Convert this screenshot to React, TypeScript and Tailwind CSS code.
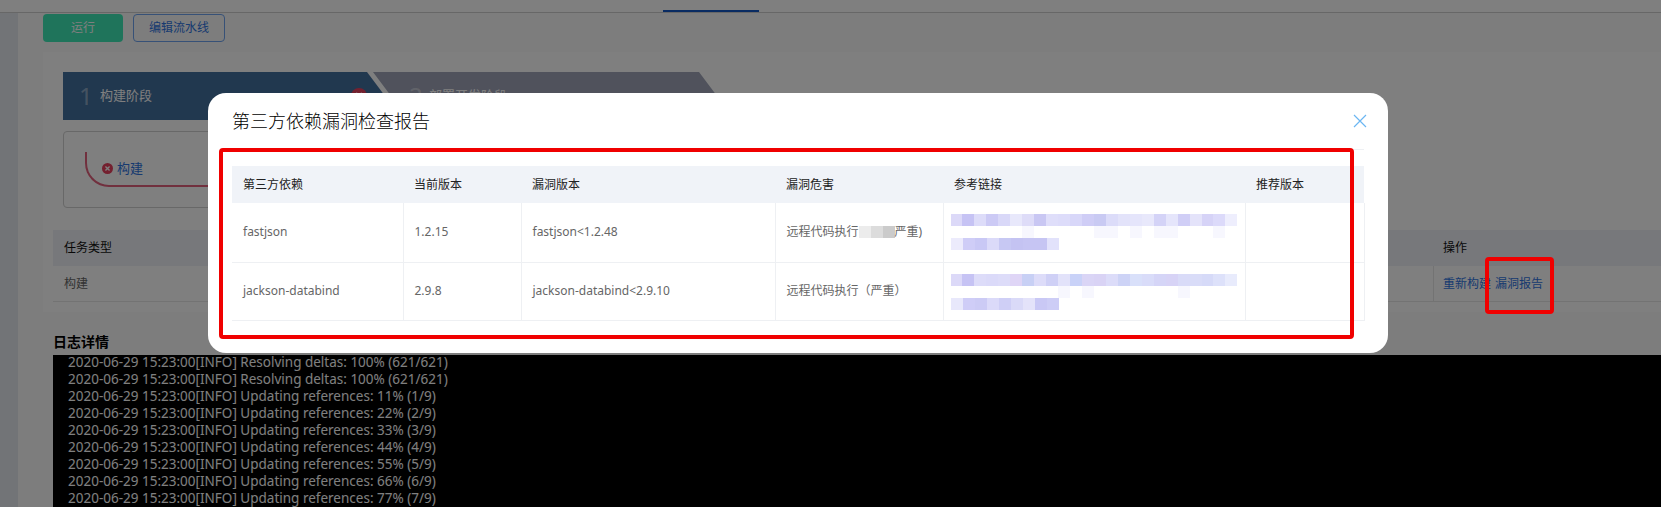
const FONT = "font-['Noto_Sans','Noto_Sans_CJK_SC',sans-serif]";

const logLines = [
  'Resolving deltas: 100% (621/621)',
  'Resolving deltas: 100% (621/621)',
  'Updating references: 11% (1/9)',
  'Updating references: 22% (2/9)',
  'Updating references: 33% (3/9)',
  'Updating references: 44% (4/9)',
  'Updating references: 55% (5/9)',
  'Updating references: 66% (6/9)',
  'Updating references: 77% (7/9)',
];

const W = '#ffffff';
const P = '#f7f7fe';
const mosaics = {
  a1: ['#dcd9f8', '#c6c3f4', '#dddcf9', '#cccaf5', '#d9d8f8', '#e8e8fb', '#dedcf8', '#c9c7f3', '#dfdefa', '#dddcfa', '#d8d7f9', '#cfcdf6', '#c9caf3', '#dcdcf9', '#e3e3fa', '#e5e5fb', '#e8e8fb', '#d4d3f7', '#e5e5fb', '#d0cef6', '#e4e3fa', '#d6d3f7', '#dcdafa', '#eeeefd'],
  a1f: [W, W, W, W, W, W, P, W, W, W, W, W, P, P, W, P, W, P, P, W, W, W, P, W],
  a2: ['#ecebfc', '#cfcdf7', '#c9c8f5', '#dbdaf9', '#c7c8f3', '#c4c3f2', '#c6c5f3', '#c6c5f3', '#e2e2fb'],
  b1: ['#dcd9f8', '#c6c3f4', '#dddcf9', '#dbdaf9', '#dddcf9', '#dfd5f6', '#c8d0f5', '#dddcf9', '#cfd0f6', '#e2e2fa', '#c9d2f8', '#dad5f6', '#d9d3f5', '#dcdcf9', '#cdd3f6', '#d9e0fa', '#d9dcf9', '#d5d5f7', '#d7d3f6', '#d9dbf8', '#d9dcf8', '#d6daf8', '#dde1fa', '#e8ebfc'],
  b1f: [W, W, W, W, W, W, W, W, W, P, W, P, W, W, W, W, W, W, W, P, W, W, W, W],
  b2: ['#e8e8fb', '#cfcdf7', '#cccbf5', '#dbdaf9', '#cfcff6', '#dadaf8', '#e4e3fa', '#c9c8f5', '#cdcdf6'],
};

function Mosaic({ cells, className = '' }: { cells: string[]; className?: string }) {
  return (
    <div className={`flex h-3 ${className}`}>
      {cells.map((c, i) => (
        <span key={i} className="block h-3 w-3" style={{ backgroundColor: c }} />
      ))}
    </div>
  );
}

function XCircle({ size, className = '' }: { size: number; className?: string }) {
  return (
    <svg width={size} height={size} viewBox="0 0 16 16" className={className}>
      <circle cx="8" cy="8" r="8" fill="#e8405f" />
      <path d="M5 5l6 6M11 5l-6 6" stroke="#fff" strokeWidth="2" />
    </svg>
  );
}

function Page() {
  return (
    <div className="flex h-[507px] flex-col overflow-hidden bg-white">
      <div className="relative h-[13px] shrink-0 border-b border-[#cfcfcf] bg-white">
        <div className="ml-[663px] mt-[10px] h-[2px] w-[96px] bg-[#1256c4]" />
      </div>
      <div className="flex min-h-0 flex-1">
        <div className="w-[18px] shrink-0 bg-[#e4e9ef]" />
        <div className="flex min-w-0 flex-1 flex-col bg-[#fbfbfb]">
          <div className="ml-[25px] mt-px flex h-[28px] gap-[10px]">
            <div className="flex w-[80px] items-center justify-center rounded-[4px] bg-[#3fe8b6] text-[12px] text-white">运行</div>
            <div className="flex w-[92px] items-center justify-center rounded-[4px] border border-[#6ea3ee] text-[12px] text-[#2f74e0]">编辑流水线</div>
          </div>
          <div className="ml-[25px] mt-[10px] flex h-[260px] flex-col bg-white pl-[10px] pt-[20px]">
            <div className="ml-[10px] flex h-[48px] w-[680px]">
              <div className="flex w-[340px] items-center bg-[#43709e] pl-[16px] [clip-path:polygon(0_0,304px_0,340px_100%,0_100%)]">
                <span className="w-[21px] text-[24px] text-white/40">1</span>
                <span className="text-[13px] text-white">构建阶段</span>
                <XCircle size={16} className="ml-[199px]" />
              </div>
              <div className="-ml-[30px] flex w-[362px] items-center bg-[#a0a4b8] pl-[36px] [clip-path:polygon(0_0,326px_0,362px_100%,36px_100%)]">
                <span className="w-[20px] text-[24px] text-white/40">2</span>
                <span className="text-[13px] text-white">部署开发阶段</span>
              </div>
            </div>
            <div className="relative ml-[10px] mt-[11px] h-[77px] w-[600px] rounded-[4px] border border-[#d0d0d0]">
              <div className="absolute left-[21px] top-[20px] h-[35px] w-[150px] rounded-bl-[24px] border-b-2 border-l-2 border-[#e2607c]" />
              <div className="absolute left-[38px] top-[27px] flex items-center gap-[4px]">
                <XCircle size={11} />
                <span className="text-[13px] text-[#2f74e0]">构建</span>
              </div>
            </div>
            <div className="mt-[22px] flex h-[36px] items-center bg-[#eef1f6] pl-[11px] pr-0 text-[12px] text-[#111]">
              <span>任务类型</span>
              <span className="ml-auto w-[228px] pl-[10px]">操作</span>
            </div>
            <div className="flex h-[36px] items-center border-b border-[#e6e6e6] pl-[11px] text-[12px] text-[#666]">
              <span>构建</span>
              <div className="ml-auto flex h-full w-[228px] items-center gap-[4px] border-l border-[#e6e6e6] pl-[9px] text-[#2f74e0]">
                <span>重新构建</span>
                <span>漏洞报告</span>
              </div>
            </div>
          </div>
          <div className="flex flex-1 flex-col pl-[35px] pt-[20px]">
            <div className="mb-[4px] h-[19px] text-[14px] font-bold leading-[19px] text-black">日志详情</div>
            <div className="flex-1 bg-black pl-[15px] text-[13.5px] leading-[17px] text-white">
              <div className="-mt-px">
                {logLines.map((l, i) => (
                  <div key={i} className="whitespace-nowrap">2020-06-29 15:23:00[INFO] {l}</div>
                ))}
              </div>
            </div>
          </div>
        </div>
      </div>
    </div>
  );
}

function Modal() {
  const th = 'px-[11px] text-left text-[12px] font-normal text-[#222]';
  const td = 'border-r border-[#eef0f3] px-[11px] align-middle text-[12px] text-[#666]';
  return (
    <div className="absolute left-[208px] top-[93px] h-[260px] w-[1180px] rounded-[18px] bg-white px-[24px]">
      <div className="flex h-[56px] items-center justify-between">
        <h2 className="text-[18px] font-light text-black">第三方依赖漏洞检查报告</h2>
        <svg width="14" height="14" viewBox="0 0 14 14" className="mr-[-3px]" fill="none" stroke="#6bb6f2" strokeWidth="1.2">
          <path d="M1 1l12 12M13 1L1 13" />
        </svg>
      </div>
      <div className="h-px w-[1132px] bg-[#eef0f3]" />
      <table className="mt-[16px] w-[1132px] table-fixed border-collapse">
        <colgroup>
          <col className="w-[171px]" />
          <col className="w-[118px]" />
          <col className="w-[254px]" />
          <col className="w-[168px]" />
          <col className="w-[302px]" />
          <col className="w-[119px]" />
        </colgroup>
        <thead>
          <tr className="h-[37px] bg-[#f0f3f8]">
            <th className={th}>第三方依赖</th>
            <th className={th}>当前版本</th>
            <th className={th}>漏洞版本</th>
            <th className={th}>漏洞危害</th>
            <th className={th}>参考链接</th>
            <th className={th}>推荐版本</th>
          </tr>
        </thead>
        <tbody>
          <tr className="h-[59px] border-b border-[#eef0f3]">
            <td className={td}>fastjson</td>
            <td className={td}>1.2.15</td>
            <td className={td}>fastjson&lt;1.2.48</td>
            <td className={td}>
              <span className="flex items-center whitespace-nowrap">
                远程代码执行
                <span className="flex h-3 w-[36px]">
                  <span className="w-3 bg-[#ececec]" />
                  <span className="w-3 bg-[#dcdcdc]" />
                  <span className="w-3 bg-[#cbcbcb]" />
                </span>
                严重)
              </span>
            </td>
            <td className={`${td} !px-[7px]`}>
              <Mosaic cells={mosaics.a1} />
              <Mosaic cells={mosaics.a1f} />
              <Mosaic cells={mosaics.a2} />
            </td>
            <td className={td} />
          </tr>
          <tr className="h-[58px] border-b border-[#eef0f3]">
            <td className={td}>jackson-databind</td>
            <td className={td}>2.9.8</td>
            <td className={td}>jackson-databind&lt;2.9.10</td>
            <td className={td}>远程代码执行（严重）</td>
            <td className={`${td} !px-[7px] pt-[2px]`}>
              <Mosaic cells={mosaics.b1} />
              <Mosaic cells={mosaics.b1f} />
              <Mosaic cells={mosaics.b2} />
            </td>
            <td className={td} />
          </tr>
        </tbody>
      </table>
    </div>
  );
}

export default function App() {
  return (
    <div className={`relative h-[507px] w-[1661px] overflow-hidden ${FONT}`}>
      <Page />
      <div className="absolute inset-0 bg-black/50" />
      <Modal />
      <div className="absolute left-[219px] top-[148px] h-[191px] w-[1135px] rounded-[4px] border-4 border-[#f00000]" />
      <div className="absolute left-[1485px] top-[257px] h-[57px] w-[69px] rounded-[4px] border-4 border-[#f00000]" />
    </div>
  );
}
